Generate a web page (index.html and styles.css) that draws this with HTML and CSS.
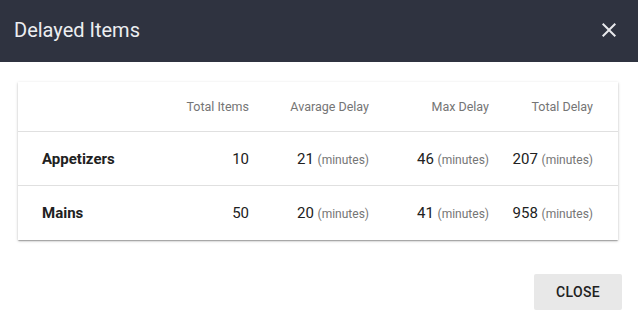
FILE: index.html
```html
<!DOCTYPE html>
<html>
<head>
<meta charset="utf-8">
<link rel="stylesheet" href="styles.css">
</head>
<body>
<div class="dialog">
  <header class="bar">
    <h1 class="title">Delayed Items</h1>
    <button class="icon-btn" aria-label="close">
      <svg width="24" height="24" viewBox="0 0 24 24"><path d="M19 6.41L17.59 5 12 10.59 6.41 5 5 6.41 10.59 12 5 17.59 6.41 19 12 13.41 17.59 19 19 17.59 13.41 12z" fill="#e8e9ec"/></svg>
    </button>
  </header>
  <main class="content">
    <div class="card">
      <div class="row head">
        <div class="cell name"></div>
        <div class="cell">Total Items</div>
        <div class="cell">Avarage Delay</div>
        <div class="cell">Max Delay</div>
        <div class="cell">Total Delay</div>
      </div>
      <div class="row">
        <div class="cell name">Appetizers</div>
        <div class="cell">10</div>
        <div class="cell">21 <span class="unit">(minutes)</span></div>
        <div class="cell">46 <span class="unit">(minutes)</span></div>
        <div class="cell">207 <span class="unit">(minutes)</span></div>
      </div>
      <div class="row last">
        <div class="cell name">Mains</div>
        <div class="cell">50</div>
        <div class="cell">20 <span class="unit">(minutes)</span></div>
        <div class="cell">41 <span class="unit">(minutes)</span></div>
        <div class="cell">958 <span class="unit">(minutes)</span></div>
      </div>
    </div>
  </main>
  <footer class="actions">
    <button class="btn">CLOSE</button>
  </footer>
</div>
</body>
</html>
```
FILE: styles.css
```css
* { box-sizing: border-box; }
html, body { margin: 0; padding: 0; background: #fff; }
body { font-family: Roboto, "Noto Sans", sans-serif; color: #212121; width: 638px; height: 324px; overflow: hidden; }
.dialog { display: flex; flex-direction: column; height: 324px; }
.bar { height: 62px; background: #2f3340; display: flex; align-items: center; justify-content: space-between; padding: 0 17px 2px 14px; }
.title { margin: 0; font-size: 20px; font-weight: 400; color: #eceef1; letter-spacing: 0; }
.icon-btn { background: none; border: 0; padding: 0; width: 24px; height: 24px; display: flex; cursor: pointer; }
.content { padding: 20px 20px 0 18px; }
.card { width: 600px; background: #fff; box-shadow: 0 1px 3px rgba(0,0,0,0.2), 0 1px 1px rgba(0,0,0,0.14), 0 2px 1px -1px rgba(0,0,0,0.12); }
.row { display: grid; grid-template-columns: 87px 120px 120px 120px 104px; padding: 0 25px 0 24px; height: 54px; align-items: center; border-bottom: 1px solid #e0e0e0; font-size: 15px; }
.row.last { border-bottom: 0; }
.row.head { height: 50px; font-size: 12.5px; color: #757575; }
.cell { text-align: right; white-space: nowrap; }
.cell.name { text-align: left; font-weight: 700; }
.unit { font-size: 12px; color: #757575; }
.actions { margin-top: auto; display: flex; justify-content: flex-end; padding: 0 16px 14px 0; }
.btn { width: 88px; height: 36px; border: 0; border-radius: 2px; background: #e8e8e8; font-family: Roboto, sans-serif; font-size: 14px; font-weight: 500; color: #212121; letter-spacing: 0.3px; }
```
